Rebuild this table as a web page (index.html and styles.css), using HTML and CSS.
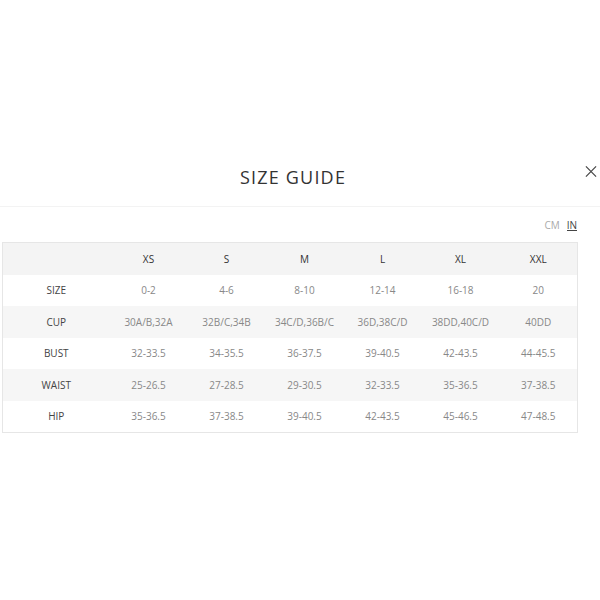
FILE: index.html
```html
<!DOCTYPE html>
<html>
<head>
<meta charset="utf-8">
<link rel="stylesheet" href="styles.css">
</head>
<body>
<div class="modal">
  <div class="head">
    <span></span>
    <h1 class="title">SIZE GUIDE</h1>
    <button class="close" aria-label="Close">
      <svg width="13" height="13" viewBox="0 0 13 13"><path d="M1 1L12 12M12 1L1 12" stroke="#444" stroke-width="1.3" fill="none"/></svg>
    </button>
  </div>
  <div class="units">
    <span class="unit">CM</span>
    <span class="unit active">IN</span>
  </div>
  <table class="sizes">
    <colgroup>
      <col class="c-label"><col class="c-val"><col class="c-val"><col class="c-val"><col class="c-val"><col class="c-val"><col class="c-val">
    </colgroup>
    <thead>
      <tr><th></th><th>XS</th><th>S</th><th>M</th><th>L</th><th>XL</th><th>XXL</th></tr>
    </thead>
    <tbody>
      <tr><th>SIZE</th><td>0-2</td><td>4-6</td><td>8-10</td><td>12-14</td><td>16-18</td><td>20</td></tr>
      <tr><th>CUP</th><td>30A/B,32A</td><td>32B/C,34B</td><td>34C/D,36B/C</td><td>36D,38C/D</td><td>38DD,40C/D</td><td>40DD</td></tr>
      <tr><th>BUST</th><td>32-33.5</td><td>34-35.5</td><td>36-37.5</td><td>39-40.5</td><td>42-43.5</td><td>44-45.5</td></tr>
      <tr><th>WAIST</th><td>25-26.5</td><td>27-28.5</td><td>29-30.5</td><td>32-33.5</td><td>35-36.5</td><td>37-38.5</td></tr>
      <tr><th>HIP</th><td>35-36.5</td><td>37-38.5</td><td>39-40.5</td><td>42-43.5</td><td>45-46.5</td><td>47-48.5</td></tr>
    </tbody>
  </table>
</div>
</body>
</html>
```
FILE: styles.css
```css
html, body {
  margin: 0;
  padding: 0;
  background: #fff;
}
body {
  font-family: "Open Sans", "Liberation Sans", sans-serif;
  color: #333;
}
.modal {
  padding-top: 165px;
}
.head {
  display: grid;
  grid-template-columns: 1fr auto 1fr;
  align-items: start;
  height: 41px;
  border-bottom: 1px solid #f3f3f3;
}
.title {
  margin: 0;
  font-size: 18px;
  line-height: 25px;
  font-weight: 500;
  letter-spacing: 1.2px;
  color: #333;
  padding-right: 14px;
}
.close {
  justify-self: end;
  margin-right: 1px;
  background: none;
  border: 0;
  padding: 0 2px;
  width: 16px;
  height: 13px;
  display: flex;
  align-items: center;
  justify-content: center;
}
.units {
  display: flex;
  justify-content: flex-end;
  gap: 7px;
  padding: 12px 23px 0 0;
  height: 23px;
  box-sizing: border-box;
  font-size: 10px;
  line-height: 12px;
}
.unit {
  color: #aaa;
}
.unit.active {
  color: #444;
  border-bottom: 1px solid #444;
  height: 11px;
}
.sizes {
  margin: 12px 0 0 2px;
  width: 575px;
  border-collapse: collapse;
  border: 1px solid #e6e6e6;
  table-layout: fixed;
  font-size: 10px;
}
.c-label {
  width: 107px;
}
.c-val {
  width: 78px;
}
.sizes th, .sizes td {
  height: 31.5px;
  padding: 0;
  text-align: center;
  font-weight: 400;
}
.sizes thead th {
  color: #333;
  background: #f4f4f4;
}
.sizes tbody th {
  color: #444;
}
.sizes td {
  color: #888;
}
.sizes tbody tr:nth-child(even) th,
.sizes tbody tr:nth-child(even) td {
  background: #f6f6f6;
}
```
